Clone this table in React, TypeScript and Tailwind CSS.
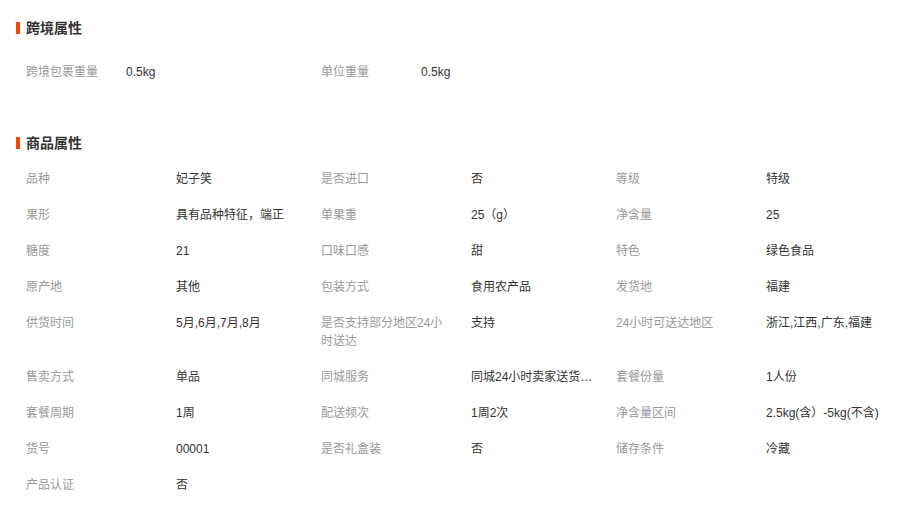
import React from 'react';

type Attr = { label: string; value: string; truncate?: boolean };

const crossBorder: Attr[] = [
  { label: '跨境包裹重量', value: '0.5kg' },
  { label: '单位重量', value: '0.5kg' },
];

const goods: Attr[] = [
  { label: '品种', value: '妃子笑' },
  { label: '是否进口', value: '否' },
  { label: '等级', value: '特级' },
  { label: '果形', value: '具有品种特征，端正' },
  { label: '单果重', value: '25（g）' },
  { label: '净含量', value: '25' },
  { label: '糖度', value: '21' },
  { label: '口味口感', value: '甜' },
  { label: '特色', value: '绿色食品' },
  { label: '原产地', value: '其他' },
  { label: '包装方式', value: '食用农产品' },
  { label: '发货地', value: '福建' },
  { label: '供货时间', value: '5月,6月,7月,8月' },
  { label: '是否支持部分地区24小时送达', value: '支持' },
  { label: '24小时可送达地区', value: '浙江,江西,广东,福建' },
  { label: '售卖方式', value: '单品' },
  { label: '同城服务', value: '同城24小时卖家送货上门', truncate: true },
  { label: '套餐份量', value: '1人份' },
  { label: '套餐周期', value: '1周' },
  { label: '配送频次', value: '1周2次' },
  { label: '净含量区间', value: '2.5kg(含）-5kg(不含)' },
  { label: '货号', value: '00001' },
  { label: '是否礼盒装', value: '否' },
  { label: '储存条件', value: '冷藏' },
  { label: '产品认证', value: '否' },
];

const SectionTitle: React.FC<{ title: string }> = ({ title }) => (
  <div className="flex items-center h-5 pl-4">
    <span className="w-1 h-3 bg-[#ff4400]" />
    <h2 className="ml-[6px] text-[14px] font-bold text-[#333] leading-5">{title}</h2>
  </div>
);

export default function App() {
  return (
    <div
      className="w-[922px] h-[509px] bg-white overflow-hidden text-[12px] leading-[18px]"
      style={{ fontFamily: '"Liberation Sans", "Noto Sans CJK SC", sans-serif' }}
    >
      {/* 跨境属性 */}
      <div className="pt-[18px]">
        <SectionTitle title="跨境属性" />
        <div className="mt-[15px] pl-[26px] grid grid-cols-[100px_195px_100px_195px]">
          {crossBorder.map((a) => (
            <React.Fragment key={a.label}>
              <div className="pt-[10px] pb-[8px] text-[#999]">{a.label}</div>
              <div className="pt-[10px] pb-[8px] text-[#333]">{a.value}</div>
            </React.Fragment>
          ))}
        </div>
      </div>

      {/* 商品属性 */}
      <div className="mt-[44px]">
        <SectionTitle title="商品属性" />
        <div className="mt-[7px] pl-[26px] grid grid-cols-[150px_145px_150px_145px_150px_145px]">
          {goods.map((a) => (
            <React.Fragment key={a.label}>
              <div className="pt-[10px] pb-[8px] pr-[20px] text-[#999]">{a.label}</div>
              <div className="pt-[10px] pb-[8px] pr-[18px] text-[#333] min-w-0">
                {a.truncate ? <div className="truncate">{a.value}</div> : a.value}
              </div>
            </React.Fragment>
          ))}
        </div>
      </div>
    </div>
  );
}
